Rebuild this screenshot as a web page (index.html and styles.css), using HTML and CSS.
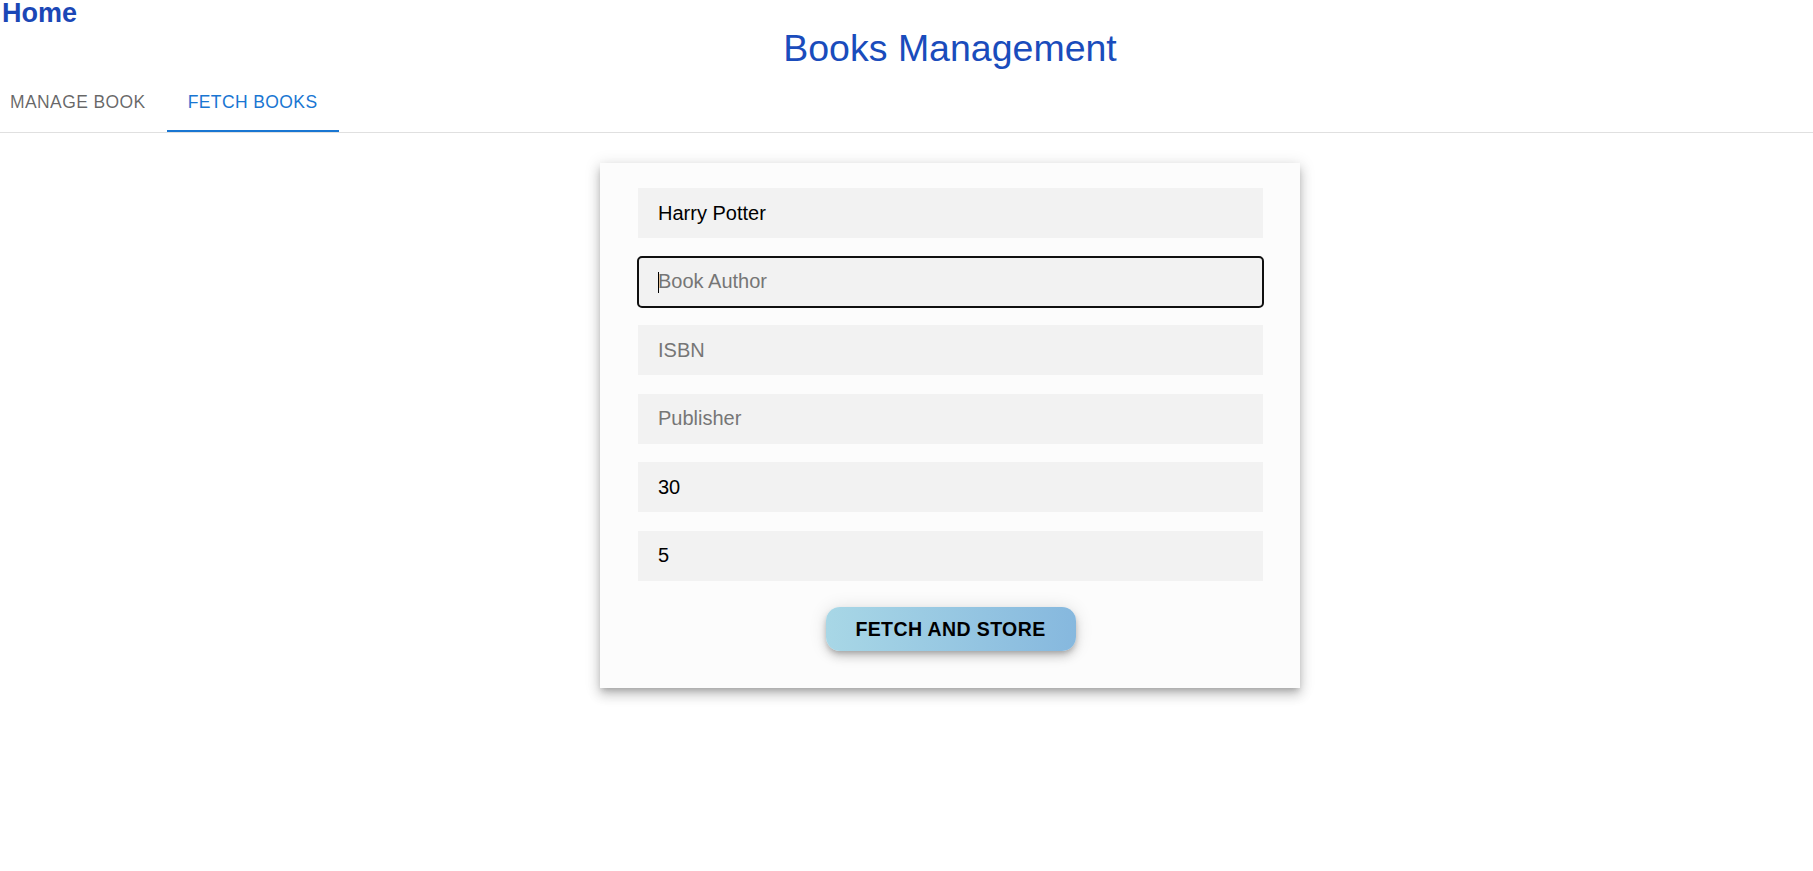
FILE: index.html
```html
<!DOCTYPE html>
<html lang="en">
<head>
<meta charset="utf-8">
<title>Books Management</title>
<link rel="stylesheet" href="styles.css">
</head>
<body>
  <a class="home" href="#">Home</a>
  <div class="title-wrap">
    <h1 class="page-title">Books Management</h1>
  </div>
  <nav class="tabs">
    <div class="tab tab-first">Manage Book</div>
    <div class="tab tab-active">Fetch Books</div>
  </nav>
  <main class="main">
    <section class="card">
      <form class="form">
        <input class="field" type="text" value="Harry Potter">
        <div class="field-wrap caret">
          <input class="field focused" type="text" placeholder="Book Author">
        </div>
        <input class="field" type="text" placeholder="ISBN">
        <input class="field" type="text" placeholder="Publisher">
        <input class="field" type="text" value="30">
        <input class="field" type="text" value="5">
        <button class="btn" type="button">Fetch and Store</button>
      </form>
    </section>
  </main>
</body>
</html>
```
FILE: styles.css
```css
html, body {
  margin: 0;
  padding: 0;
  background: #ffffff;
  font-family: "Liberation Sans", Arial, sans-serif;
}

body {
  min-height: 871px;
}

.home {
  display: block;
  padding-left: 2px;
  font-size: 27px;
  line-height: 27px;
  font-weight: 700;
  color: #1b47b6;
  text-decoration: none;
}

.title-wrap {
  padding-left: 87px;
}

.page-title {
  margin: 0;
  text-align: center;
  font-size: 37.5px;
  line-height: 43px;
  font-weight: 400;
  color: #1a4cbc;
}

.tabs {
  display: flex;
  margin-top: 2px;
  height: 60px;
  border-bottom: 1px solid #e0e0e0;
}

.tab {
  position: relative;
  display: flex;
  align-items: center;
  padding: 0 21px;
  font-size: 17.5px;
  letter-spacing: 0.4px;
  text-transform: uppercase;
  color: rgba(0, 0, 0, 0.6);
  white-space: nowrap;
}

.tab-first {
  padding-left: 10px;
}

.tab-active {
  color: #1976d2;
}

.tab-active::after {
  content: "";
  position: absolute;
  left: 0;
  right: 0;
  bottom: 0;
  height: 2px;
  background: #1976d2;
}

.main {
  display: flex;
  justify-content: center;
  padding-left: 87px;
  padding-top: 30px;
  padding-bottom: 80px;
}

.card {
  width: 700px;
  box-sizing: border-box;
  padding: 25px 37px 37px 38px;
  background: #fcfcfc;
  box-shadow: 0 4px 6px -2px rgba(0, 0, 0, 0.22),
              0 7px 11px 1px rgba(0, 0, 0, 0.14),
              0 2px 14px 2px rgba(0, 0, 0, 0.1);
}

.form {
  display: flex;
  flex-direction: column;
  gap: 18.5px;
}

.field-wrap {
  position: relative;
  display: flex;
}

.field {
  display: block;
  width: 100%;
  height: 50px;
  box-sizing: border-box;
  margin: 0;
  border: none;
  padding: 0 20px;
  background: #f2f2f2;
  font-family: "Liberation Sans", Arial, sans-serif;
  font-size: 20px;
  color: #000000;
}

.field::placeholder {
  color: #767676;
}

.field.focused {
  outline: 2px solid #101010;
  outline-offset: -1px;
  border-radius: 4px;
}

.caret::after {
  content: "";
  position: absolute;
  left: 20px;
  top: 15px;
  width: 1px;
  height: 21px;
  background: #000000;
}

.btn {
  align-self: center;
  margin-top: 8px;
  width: 250px;
  height: 44px;
  border: none;
  border-radius: 14px;
  background: linear-gradient(to right, #a8d7e6, #86b8de);
  font-family: "Liberation Sans", Arial, sans-serif;
  font-size: 19.5px;
  font-weight: 700;
  letter-spacing: 0.4px;
  text-transform: uppercase;
  color: #000000;
  box-shadow: 0 3px 5px -1px rgba(0, 0, 0, 0.2),
              0 6px 10px 0 rgba(0, 0, 0, 0.14),
              0 1px 18px 0 rgba(0, 0, 0, 0.12);
  cursor: pointer;
}
```
